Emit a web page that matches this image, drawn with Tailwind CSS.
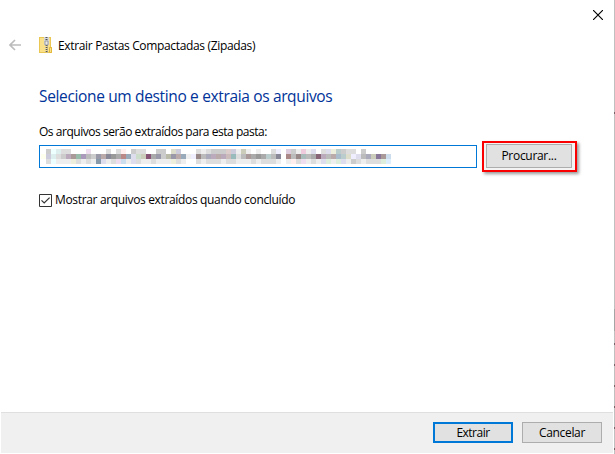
<!DOCTYPE html>
<html lang="pt-BR">
  <head>
    <meta charset="utf-8">
    <title>Extrair Pastas Compactadas (Zipadas)</title>
    <script src="https://cdn.jsdelivr.net/npm/@tailwindcss/browser@4"></script>
  </head>
<body class="overflow-hidden bg-white">

  <div class="relative flex h-[454px] w-[615px] flex-col bg-white font-['Open_Sans','Noto_Sans',sans-serif] text-[12px] leading-4 text-black">

    <!-- Title bar -->
    <div class="flex h-[30px] justify-end pt-[10px] pr-3">
      <svg class="h-[10px] w-[10px]" viewBox="0 0 10 10" fill="none" stroke="#000" stroke-width="1.15">
        <path d="M0 0L10 10M10 0L0 10"/>
      </svg>
    </div>

    <!-- Wizard header -->
    <div class="flex h-[30px] items-center pl-[9px]">
      <svg class="h-3 w-3" viewBox="0 0 12 12" fill="none" stroke="#bcbcbc" stroke-width="1.6">
        <path d="M12 6H1M6 1L1 6L6 11"/>
      </svg>
      <svg class="ml-[18px] h-4 w-[13px]" viewBox="0 0 13 16">
        <path d="M0 0H12V10H13V16H0Z" fill="#eac653"/>
        <path d="M1 1H11V11H12V15H1Z" fill="#fbe08a"/>
        <path d="M10.5 10.5h2v5h-2z" fill="#fbe08a" stroke="#e3b93d"/>
        <path d="M5 0h5v8H5z" fill="#d5d7d9"/>
        <path d="M7.5 0V16" stroke="#555" stroke-width="2" stroke-dasharray="1 1"/>
        <path d="M6.5 8V16M8.5 7V16" stroke="#b4b4b0" stroke-width=".8" stroke-dasharray="1 1"/>
        <path d="M6 4h3v4H6z" fill="#e8e8e8" stroke="#858585" stroke-width=".7"/>
      </svg>
      <span class="relative top-px ml-[6px] whitespace-nowrap tracking-[-0.34px]">Extrair Pastas Compactadas (Zipadas)</span>
    </div>

    <!-- Page content -->
    <div class="flex grow flex-col pl-[39px]">
      <h1 class="mt-6 text-[15.5px] leading-6 whitespace-nowrap text-[#003399]"><span class="tracking-[-0.35px]">Selecione um destino e extraia os arquivos</span></h1>
      <p class="mt-4 whitespace-nowrap"><span class="tracking-[-0.46px]">Os arquivos serão extraídos para esta pasta:</span></p>

      <div class="mt-px flex h-[31px] items-center">
        <div class="flex h-[23px] w-[438px] items-center border border-[#0078d7] bg-white">
          <svg id="path" class="ml-px h-[15px] w-[350px]" viewBox="0 0 350 15" shape-rendering="crispEdges"></svg>
        </div>
        <div class="ml-[5px] flex h-[31px] w-[95px] items-start border-2 border-[#fa0000] bg-[#f3f3f3] pt-px pl-[2px] shadow-[2px_2px_3px_rgba(0,0,0,0.4)]">
          <button class="h-6 w-[86px] border border-[#adadad] bg-[#e1e1e1] tracking-[-0.3px]">Procurar...</button>
        </div>
      </div>

      <label class="mt-5 flex items-center whitespace-nowrap">
        <svg class="h-[13px] w-[13px]" viewBox="0 0 13 13" fill="none" stroke="#333">
          <path d="M.5 .5h12v12H.5z"/>
          <path d="M2.5 6.3L5.2 9L10.6 3.6" stroke-width="1.2"/>
        </svg>
        <span class="ml-[3px] tracking-[-0.34px]">Mostrar arquivos extraídos quando concluído</span>
      </label>
    </div>

    <!-- Footer -->
    <div class="mr-[2px] mb-px ml-px flex h-[41px] items-start justify-end gap-[9px] border-t border-[#dfdfdf] bg-[#f0f0f0] pt-[9px] pr-[11px]">
      <button class="h-[21px] w-20 border-2 border-[#0078d7] bg-[#e1e1e1] leading-[17px] tracking-[-0.5px]">Extrair</button>
      <button class="h-[21px] w-20 border border-[#adadad] bg-[#e1e1e1] leading-[19px] tracking-[-0.35px]">Cancelar</button>
    </div>

    <!-- Window edge -->
    <svg class="absolute top-0 right-0 h-[454px] w-px" viewBox="0 0 1 454" shape-rendering="crispEdges">
      <path d="M0 0h1v454H0z" fill="#c0c0c0"/>
      <path d="M0 309h1v22H0z" fill="#a5a5a5"/>
      <path d="M0 112h1v2H0zM0 343h1v2H0zM0 364h1v2H0zM0 385h1v2H0zM0 406h1v2H0zM0 427h1v2H0zM0 448h1v2H0z" fill="#796268"/>
    </svg>
  </div>

  <script>
    // Pixelated folder path, one colour per 5px block
    const rows = [
      'fff ccc eff dee ddd ddd fff fff fff ede fff fff fff ddd fff ddd fee fff ccc ddd ddd fff fff ccc ccc fff ddc ccd fff fff fff ddd eee ddd ccc ccc ccc dcc ccd eee ccb eee fff eee fff fff ddd eef fff dcd ccc eee ecd eee dde fff ddd dde eed bcc ccc ddd ddd fff ccc fff fff fff fff fff',
      'ffe ccd dee ddd ccc bab a99 9ba a9b bbb ccc 99a baa 889 999 aaa b88 9ab dde cdc ccb 857 aaa 99a ccc bba 99a baa 9ab eee eef 988 bbb aab bab baa bab cbb 9bb ddd bbb a99 aaa 999 aaa bcc bbb 889 fff a88 bbb 988 abb bbb aaa 867 bab bbb baa abc bcc ddc eef dde bbb aab ccb 879 a99 cde',
      'fff ddd eff eee eee eee eed ddd eee ddd eee 89a dde eee ddd ede cde eee dde ddd eee eee ddd eee eee eee eed ddd eee fff fff ddd eee ddd ddd ddd eee ddd ddd eee eee eee ddd eee ddd ddd ddd eee fff eee fee ddd ede eee ddd eee dde ded eee ded dde eee ccc ddd eee ddd ddd ddd ded def',
    ]
    const strip = document.getElementById('path')
    rows.forEach((row, y) => row.split(' ').forEach((color, x) => {
      const block = document.createElementNS('http://www.w3.org/2000/svg', 'rect')
      block.setAttribute('x', x * 5)
      block.setAttribute('y', y * 5)
      block.setAttribute('width', 5)
      block.setAttribute('height', 5)
      block.setAttribute('fill', '#' + color)
      strip.appendChild(block)
    }))
  </script>
</body>
</html>
